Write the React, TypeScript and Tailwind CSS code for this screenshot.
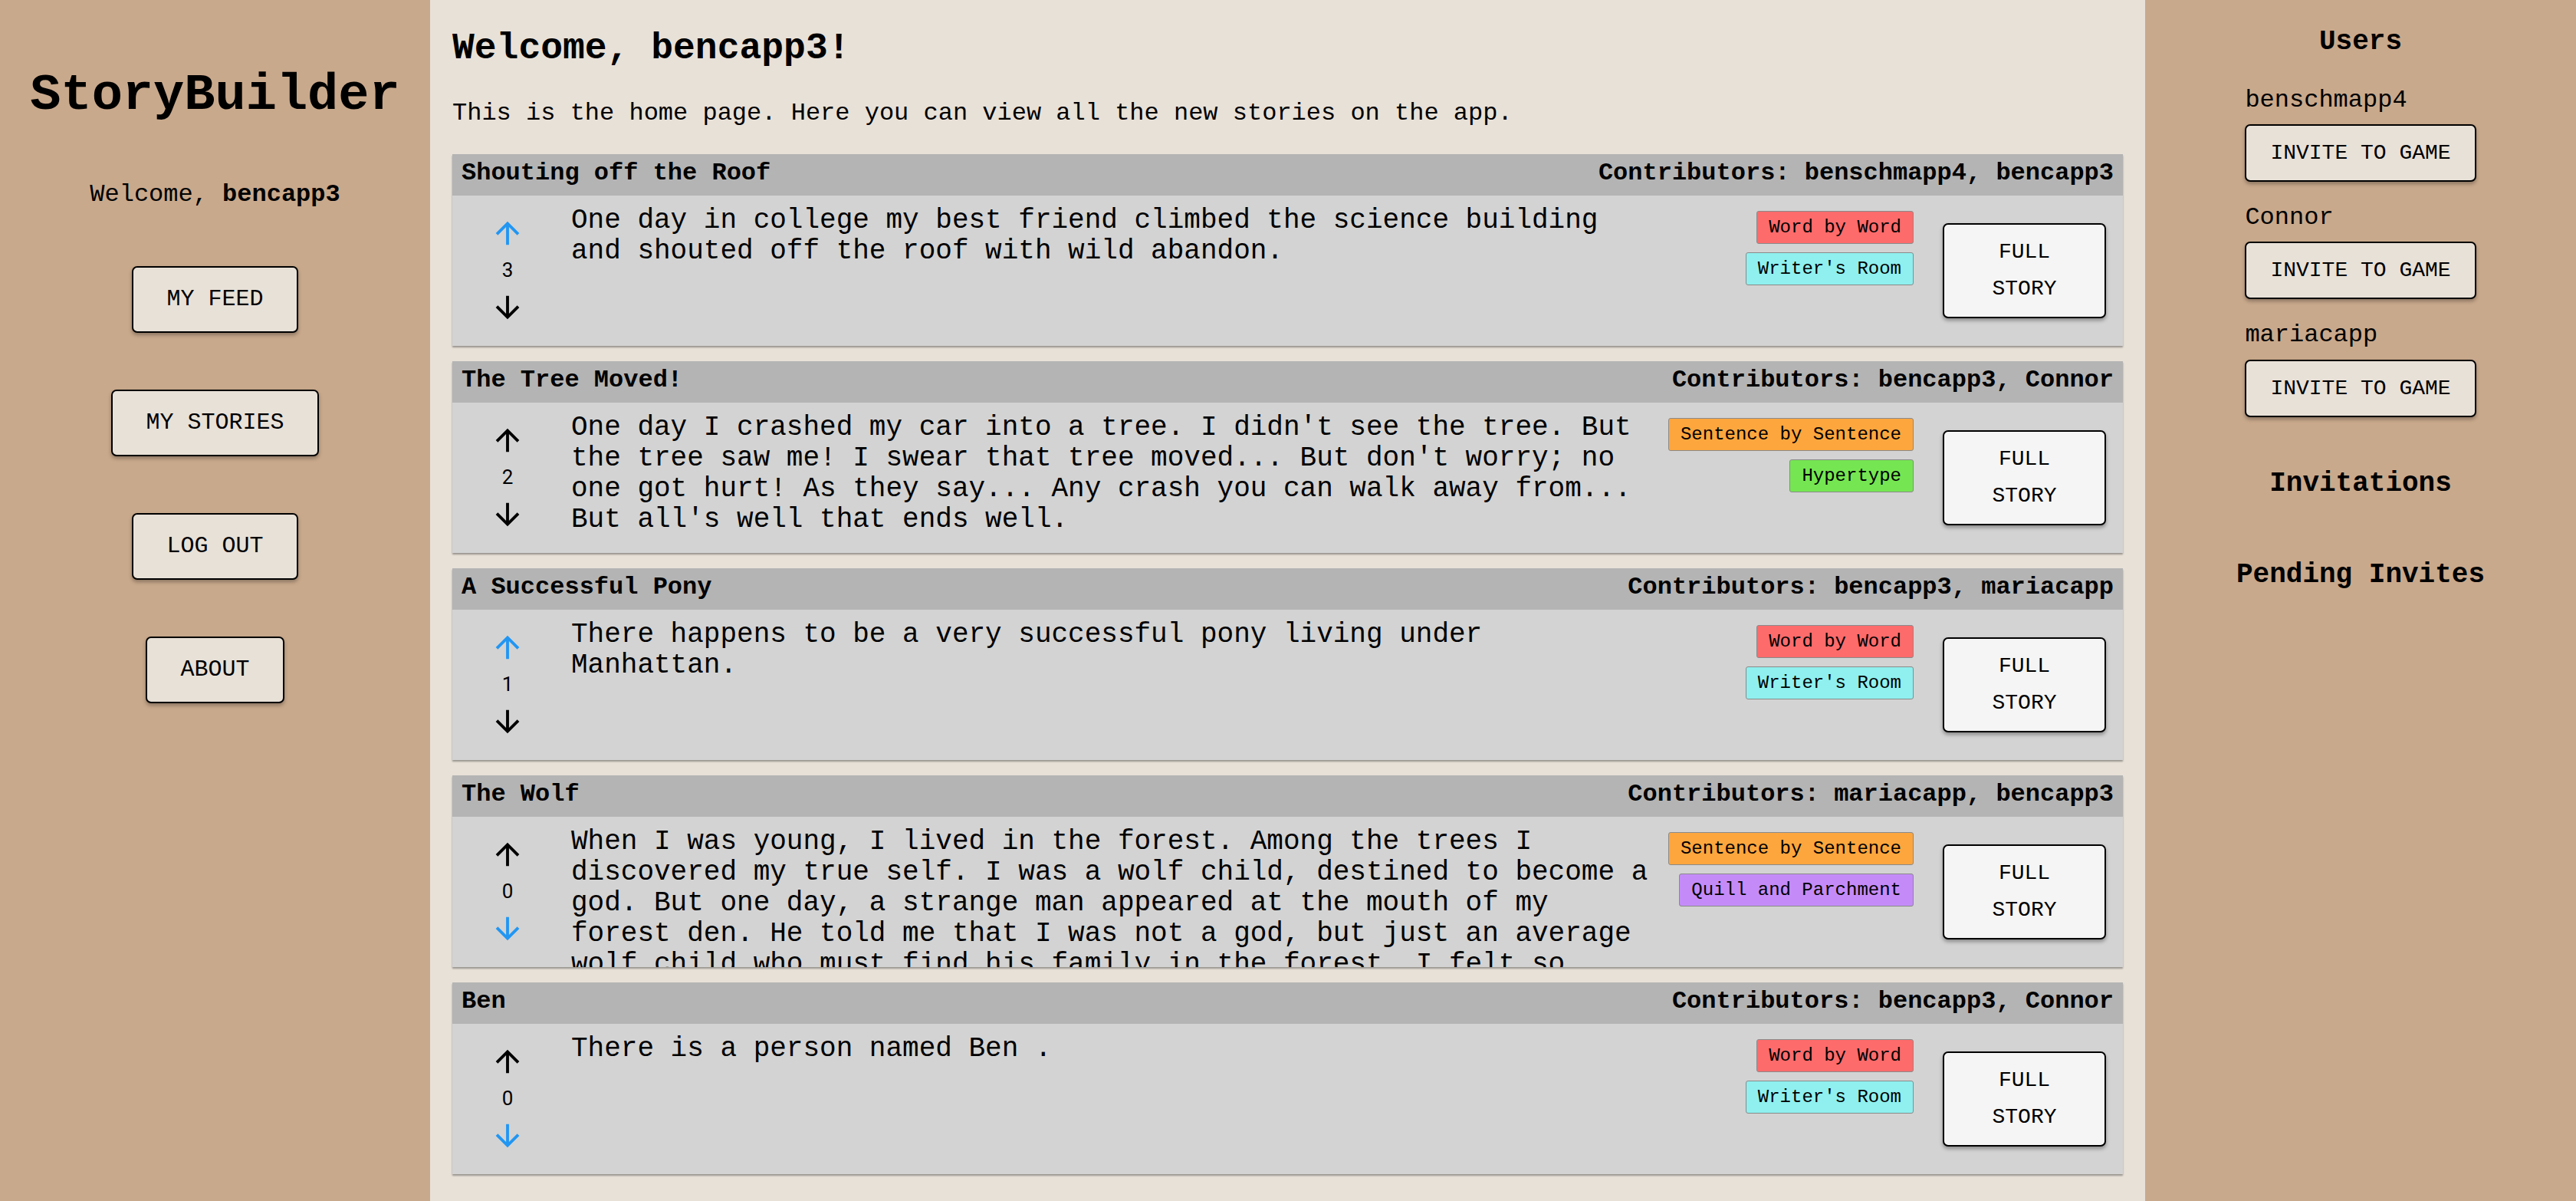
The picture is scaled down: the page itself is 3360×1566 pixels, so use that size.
import React from "react";

type Story = {
    title: string;
    contributors: string[];
    votes: number;
    vote: "up" | "down" | null;
    text: string;
    tags: { label: string; color: string }[];
};

const WORD = { label: "Word by Word", color: "bg-[#fe6b6b]" };
const ROOM = { label: "Writer's Room", color: "bg-[#8ff0ef]" };
const SENTENCE = { label: "Sentence by Sentence", color: "bg-[#fda63e]" };
const HYPER = { label: "Hypertype", color: "bg-[#75e652]" };
const QUILL = { label: "Quill and Parchment", color: "bg-[#c48bf8]" };

const STORIES: Story[] = [
    {
        title: "Shouting off the Roof",
        contributors: ["benschmapp4", "bencapp3"],
        votes: 3,
        vote: "up",
        text: "One day in college my best friend climbed the science building and shouted off the roof with wild abandon.",
        tags: [WORD, ROOM],
    },
    {
        title: "The Tree Moved!",
        contributors: ["bencapp3", "Connor"],
        votes: 2,
        vote: null,
        text: "One day I crashed my car into a tree. I didn't see the tree. But the tree saw me! I swear that tree moved... But don't worry; no one got hurt! As they say... Any crash you can walk away from... But all's well that ends well.",
        tags: [SENTENCE, HYPER],
    },
    {
        title: "A Successful Pony",
        contributors: ["bencapp3", "mariacapp"],
        votes: 1,
        vote: "up",
        text: "There happens to be a very successful pony living under Manhattan.",
        tags: [WORD, ROOM],
    },
    {
        title: "The Wolf",
        contributors: ["mariacapp", "bencapp3"],
        votes: 0,
        vote: "down",
        text: "When I was young, I lived in the forest. Among the trees I discovered my true self. I was a wolf child, destined to become a god. But one day, a strange man appeared at the mouth of my forest den. He told me that I was not a god, but just an average wolf child who must find his family in the forest. I felt so lonely, but I set out to find them anyway.",
        tags: [SENTENCE, QUILL],
    },
    {
        title: "Ben",
        contributors: ["bencapp3", "Connor"],
        votes: 0,
        vote: "down",
        text: "There is a person named Ben .",
        tags: [WORD, ROOM],
    },
];

const USERS = ["benschmapp4", "Connor", "mariacapp"];

function ArrowUp({ active }: { active: boolean }) {
    return (
        <svg viewBox="0 0 24 24" className={`w-[46px] h-[46px] ${active ? "fill-[#2196f3]" : "fill-black"}`}>
            <path d="M4 12l1.41 1.41L11 7.83V20h2V7.83l5.58 5.59L20 12l-8-8-8 8z" />
        </svg>
    );
}

function ArrowDown({ active }: { active: boolean }) {
    return (
        <svg viewBox="0 0 24 24" className={`w-[46px] h-[46px] ${active ? "fill-[#2196f3]" : "fill-black"}`}>
            <path d="M20 12l-1.41-1.41L13 16.17V4h-2v12.17l-5.58-5.59L4 12l8 8 8-8z" />
        </svg>
    );
}

function StoryCard({ story }: { story: Story }) {
    return (
        <div className="relative h-[250px] flex flex-col shadow-[0_2px_2px_rgba(0,0,0,0.35)]">
            {/* Header */}
            <div className="h-[54px] shrink-0 bg-[#b4b4b4] px-[12px] pb-[4px] flex items-center justify-between font-bold text-[32px]">
                <span>{story.title}</span>
                <span>Contributors: {story.contributors.join(", ")}</span>
            </div>

            {/* Body */}
            <div className="h-[196px] bg-[#d3d3d3] flex overflow-hidden">
                <div className="w-[100px] ml-[22px] shrink-0 flex flex-col items-center justify-center">
                    <ArrowUp active={story.vote === "up"} />
                    <div className="h-[51px] flex items-center justify-center font-['Roboto',sans-serif] text-[26px]">
                        {story.votes}
                    </div>
                    <ArrowDown active={story.vote === "down"} />
                </div>

                <p className="w-[1412px] shrink-0 ml-[33px] pt-[13px] text-[36px] leading-[40px]">{story.text}</p>

                <div className="flex-1 flex flex-col items-end pt-[20px] gap-[11px]">
                    {story.tags.map((tag) => (
                        <span
                            key={tag.label}
                            className={`${tag.color} border border-[#8a8a8a] rounded-[3px] px-[15px] py-[7px] text-[24px] leading-[27px] whitespace-nowrap`}
                        >
                            {tag.label}
                        </span>
                    ))}
                </div>

                <button className="self-center w-[213px] shrink-0 ml-[38px] mr-[22px] px-[40px] py-[12px] bg-[#f5f5f5] border-2 border-black rounded-[7px] text-[28px] leading-[48px] text-center shadow-[0_3px_5px_rgba(0,0,0,0.35)]">
                    FULL STORY
                </button>
            </div>
        </div>
    );
}

export default function App() {
    return (
        <div className="flex h-[1566px] w-full overflow-hidden font-['Liberation_Mono',monospace] leading-[1.133] text-black">
            {/* Left sidebar */}
            <aside className="w-[561px] shrink-0 bg-[#c9a98c] flex flex-col items-center">
                <h1 className="mt-[87px] text-[67px] font-bold">StoryBuilder</h1>
                <p className="mt-[73px] text-[32px]">
                    Welcome, <span className="font-bold">bencapp3</span>
                </p>
                <div className="mt-[75px] flex flex-col items-center gap-[74px]">
                    {["MY FEED", "MY STORIES", "LOG OUT", "ABOUT"].map((label) => (
                        <button
                            key={label}
                            className="bg-[#e8e1d8] border-2 border-black rounded-[7px] px-[43px] py-[24px] text-[30px] leading-[35px] shadow-[0_3px_5px_rgba(0,0,0,0.3)]"
                        >
                            {label}
                        </button>
                    ))}
                </div>
            </aside>

            {/* Main feed */}
            <main className="flex-1 bg-[#e8e1d8] px-[29px]">
                <h2 className="mt-[36px] text-[48px] font-bold">Welcome, bencapp3!</h2>
                <p className="mt-[40px] text-[32px]">
                    This is the home page. Here you can view all the new stories on the app.
                </p>
                <div className="mt-[34px] flex flex-col gap-[20px]">
                    {STORIES.map((story) => (
                        <StoryCard key={story.title} story={story} />
                    ))}
                </div>
            </main>

            {/* Right sidebar */}
            <aside className="w-[562px] shrink-0 bg-[#c9a98c] flex flex-col items-center">
                <h3 className="mt-[35px] text-[36px] font-bold">Users</h3>
                <div className="mt-[37px] flex flex-col items-start">
                    {USERS.map((user, i) => (
                        <div key={user} className={`flex flex-col items-start ${i > 0 ? "mt-[29px]" : ""}`}>
                            <span className="text-[32px]">{user}</span>
                            <button className="mt-[13px] bg-[#e8e1d8] border-2 border-black rounded-[7px] px-[31px] py-[19px] text-[28px] leading-[33px] shadow-[0_3px_5px_rgba(0,0,0,0.3)]">
                                INVITE TO GAME
                            </button>
                        </div>
                    ))}
                </div>
                <h3 className="mt-[67px] text-[36px] font-bold">Invitations</h3>
                <h3 className="mt-[79px] text-[36px] font-bold">Pending Invites</h3>
            </aside>
        </div>
    );
}
